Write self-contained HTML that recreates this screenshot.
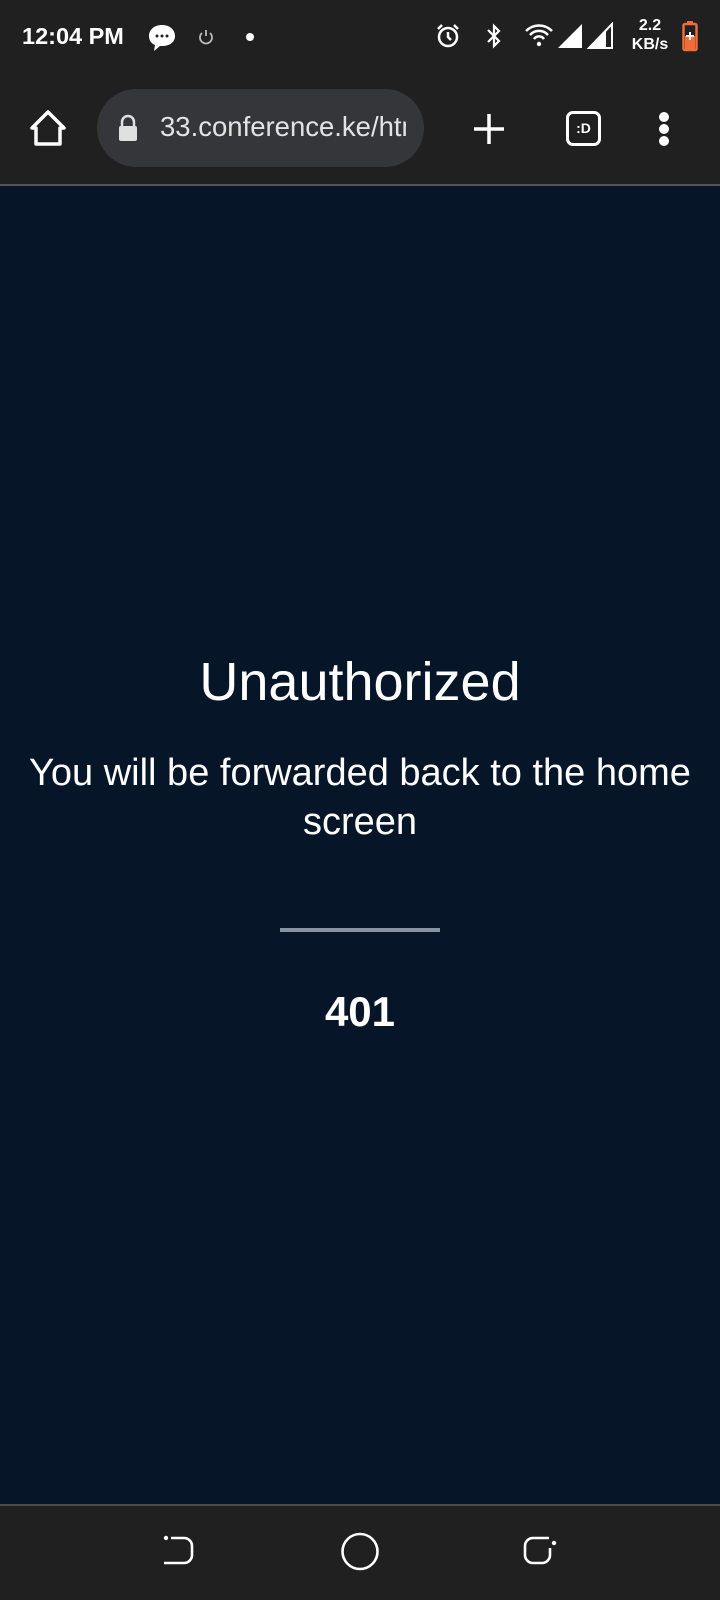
<!DOCTYPE html>
<html><head><meta charset="utf-8"><style>
*{margin:0;padding:0;box-sizing:border-box}
body{width:720px;height:1600px;background:#061628;font-family:"Liberation Sans",sans-serif;position:relative;overflow:hidden;color:#fff}
.top{position:absolute;left:0;top:0;width:720px;height:184px;background:#202020}
.line{position:absolute;left:0;top:184px;width:720px;height:2px;background:#555}
.nav{position:absolute;left:0;top:1504px;width:720px;height:96px;background:#202020;border-top:2px solid #4a4a4a}
.abs{position:absolute}
.c{position:absolute;left:0;width:720px;text-align:center}
</style></head><body>
<div class="top"></div><div class="line"></div>
<div class="abs" style="left:22px;top:23px;font-size:23.5px;font-weight:bold;color:#fff">12:04 PM</div>
<svg class="abs" style="left:146px;top:22px" width="32" height="32" viewBox="0 0 32 32"><path d="M16 3C8 3 3 8 3 14c0 5 3 8 6 9l-1 6 6-5h2c8 0 13-4 13-10S24 3 16 3z" fill="#fff"/><circle cx="11" cy="14" r="1.5" fill="#222"/><circle cx="16" cy="14" r="1.5" fill="#222"/><circle cx="21" cy="14" r="1.5" fill="#222"/></svg>
<svg class="abs" style="left:197px;top:28px" width="18" height="18" viewBox="0 0 18 18"><path d="M5 5a6 6 0 1 0 8 0M9 2v6" stroke="#bbb" stroke-width="1.8" fill="none"/></svg>
<div class="abs" style="left:246px;top:33px;width:8px;height:8px;border-radius:50%;background:#fff"></div>
<svg class="abs" style="left:434px;top:22px" width="28" height="28" viewBox="0 0 28 28"><circle cx="14" cy="15" r="9" stroke="#fff" stroke-width="2.5" fill="none"/><path d="M14 10v5l3 3M4 7l4-4M24 7l-4-4" stroke="#fff" stroke-width="2.5" fill="none"/></svg>
<svg class="abs" style="left:484px;top:22px" width="20" height="28" viewBox="0 0 20 28"><path d="M4 8l11 11-5 5V4l5 5L4 20" stroke="#fff" stroke-width="2.2" fill="none"/></svg>
<svg class="abs" style="left:524px;top:22px" width="30" height="26" viewBox="0 0 30 26"><path d="M2 9a18 18 0 0 1 26 0M6 13a12 12 0 0 1 18 0M10 17a6 6 0 0 1 10 0" stroke="#fff" stroke-width="2.5" fill="none"/><circle cx="15" cy="22" r="2.2" fill="#fff"/></svg>
<svg class="abs" style="left:556px;top:22px" width="58" height="28" viewBox="0 0 58 28"><path d="M2 26L26 2v24z" fill="#fff"/><path d="M33 26L56 2v24z" fill="none" stroke="#fff" stroke-width="2"/><path d="M33 26l17-17v17z" fill="#fff"/></svg>
<div class="abs" style="left:628px;top:16px;font-size:16px;font-weight:bold;line-height:19px;text-align:center;width:44px">2.2<br>KB/s</div>
<svg class="abs" style="left:682px;top:20px" width="16" height="32" viewBox="0 0 16 32"><rect x="5" y="1" width="6" height="3" fill="#f26b3a"/><rect x="1.5" y="4" width="13" height="26" rx="1.5" fill="none" stroke="#f26b3a" stroke-width="2.5"/><rect x="3" y="16" width="10" height="13" fill="#f26b3a"/><path d="M8 12v8M4 16h8" stroke="#fff" stroke-width="2"/></svg>
<svg class="abs" style="left:28px;top:108px" width="40" height="40" viewBox="0 0 40 40"><path d="M4 20L20 4l16 16h-4v16H8V20z" stroke="#fff" stroke-width="3.5" fill="none" stroke-linejoin="round"/></svg>
<div class="abs" style="left:97px;top:89px;width:327px;height:78px;border-radius:39px;background:#35363a"></div>
<svg class="abs" style="left:117px;top:114px" width="22" height="28" viewBox="0 0 22 28"><path d="M5 12V8a6 6 0 0 1 12 0v4" stroke="#e0e0e0" stroke-width="2.5" fill="none"/><rect x="2" y="12" width="18" height="15" rx="2" fill="#e0e0e0"/></svg>
<div class="abs" style="left:160px;top:111px;font-size:27.5px;color:#e3e3e3;width:246px;overflow:hidden;white-space:nowrap">33.conference.ke/html</div>
<svg class="abs" style="left:472px;top:112px" width="34" height="34" viewBox="0 0 34 34"><path d="M17 2v30M2 17h30" stroke="#fff" stroke-width="3.5"/></svg>
<div class="abs" style="left:566px;top:111px;width:35px;height:35px;border:3.5px solid #fff;border-radius:7px;font-size:14px;font-weight:bold;text-align:center;line-height:28px">:D</div>
<div class="abs" style="left:659px;top:112px;width:10px;height:10px;border-radius:50%;background:#fff;box-shadow:0 12px 0 #fff,0 24px 0 #fff"></div>
<div class="c" style="top:652px;font-size:54px;line-height:60px">Unauthorized</div>
<div class="c" style="top:749px;font-size:38px;line-height:49px">You will be forwarded back to the home<br>screen</div>
<div class="abs" style="left:280px;top:928px;width:160px;height:4px;background:#8593a0"></div>
<div class="c" style="top:988px;font-size:42px;font-weight:bold;line-height:48px">401</div>
<div class="nav"></div>
<svg class="abs" style="left:160px;top:1533px" width="40" height="40" viewBox="0 0 40 40"><circle cx="6" cy="5" r="2.2" fill="#fff"/><path d="M11 5h13a8 8 0 0 1 8 8v9a8 8 0 0 1-8 8H4" stroke="#fff" stroke-width="2.6" fill="none"/></svg>
<svg class="abs" style="left:340px;top:1532px" width="40" height="40" viewBox="0 0 40 40"><ellipse cx="20" cy="19.5" rx="17.5" ry="17.5" stroke="#fff" stroke-width="2.6" fill="none"/></svg>
<svg class="abs" style="left:520px;top:1533px" width="40" height="40" viewBox="0 0 40 40"><circle cx="34" cy="10" r="2.2" fill="#fff"/><path d="M29 5H13a8 8 0 0 0-8 8v9a8 8 0 0 0 8 8h9a8 8 0 0 0 8-8v-7" stroke="#fff" stroke-width="2.6" fill="none"/></svg>
</body></html>
